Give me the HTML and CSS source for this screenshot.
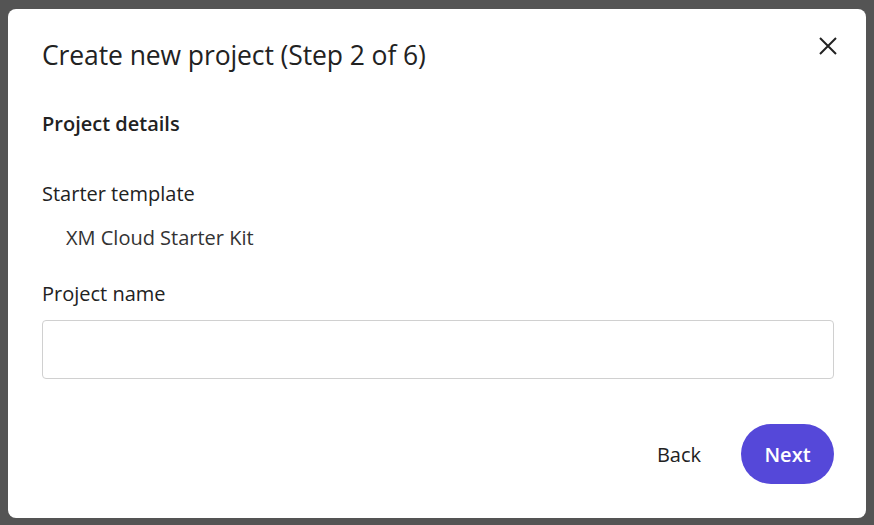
FILE: index.html
```html
<!DOCTYPE html>
<html>
<head>
<meta charset="utf-8">
<link rel="stylesheet" href="styles.css">
</head>
<body>
<div class="dialog">
  <div class="header">
    <h1 class="title">Create new project (Step 2 of 6)</h1>
    <button class="close" aria-label="Close">
      <svg width="20" height="20" viewBox="0 0 20 20"><path d="M2 2L18 18M18 2L2 18" stroke="#222" stroke-width="2" fill="none"/></svg>
    </button>
  </div>
  <div class="body">
    <h2 class="section">Project details</h2>
    <div class="field">
      <div class="label">Starter template</div>
      <div class="value">XM Cloud Starter Kit</div>
    </div>
    <div class="field">
      <div class="label">Project name</div>
      <input class="input" type="text">
    </div>
  </div>
  <div class="footer">
    <button class="btn back">Back</button>
    <button class="btn next">Next</button>
  </div>
</div>
</body>
</html>
```
FILE: styles.css
```css
html, body { margin: 0; padding: 0; }
body {
  background: #545454;
  width: 874px;
  height: 525px;
  padding: 9px 8px 7px 8px;
  box-sizing: border-box;
  font-family: "Open Sans", "Noto Sans", sans-serif;
  color: #222;
}
.dialog {
  background: #fff;
  border-radius: 8px;
  height: 509px;
  box-sizing: border-box;
  padding: 0 32px 0 34px;
  display: flex;
  flex-direction: column;
}
.header {
  display: flex;
  justify-content: space-between;
  align-items: flex-start;
  padding-top: 30px;
}
.title {
  margin: 0;
  font-size: 26.5px;
  font-weight: 400;
  line-height: 32px;
  color: #222;
  letter-spacing: -0.1px;
}
.close {
  border: 0;
  background: none;
  padding: 0;
  margin: -5px -6px 0 0;
  width: 24px;
  height: 24px;
  display: flex;
  align-items: center;
  justify-content: center;
  cursor: pointer;
}
.body { padding-top: 40px; }
.section {
  margin: 0 0 44px 0;
  font-size: 20px;
  font-weight: 600;
  line-height: 26px;
}
.field { display: flex; flex-direction: column; }
.label { font-size: 20px; line-height: 26px; color: #222; }
.value { font-size: 20px; line-height: 26px; color: #333; padding: 18px 0 0 24px; margin-bottom: 30px; }
.input {
  margin-top: 13px;
  height: 59px;
  box-sizing: border-box;
  border: 1px solid #d0d0d0;
  border-radius: 4px;
  font-size: 18px;
  padding: 0 12px;
}
.footer {
  margin-top: 45px;
  display: flex;
  justify-content: flex-end;
  align-items: center;
  gap: 24px;
}
.btn {
  font-family: inherit;
  font-size: 20px;
  border: 0;
  cursor: pointer;
  height: 60px;
  border-radius: 30px;
  padding: 0 24px;
}
.back { background: none; color: #222; padding: 0 16px; }
.next { background: #5548d9; color: #fff; font-weight: 600; width: 93px; padding: 0; }
```
